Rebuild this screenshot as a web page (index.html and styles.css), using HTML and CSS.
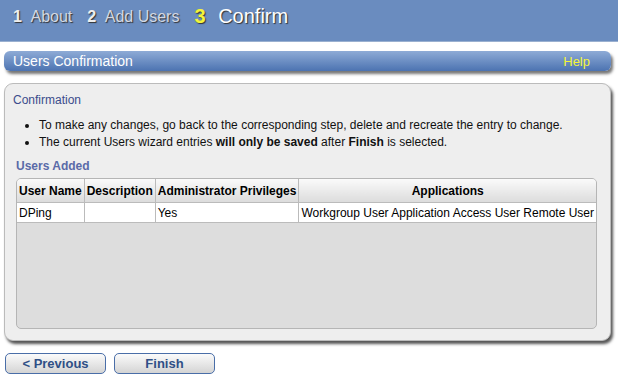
FILE: index.html
```html
<!DOCTYPE html>
<html lang="en">

<head>
    <meta charset="UTF-8">
    <title>Users Wizard - Confirm</title>
    <link rel="stylesheet" href="styles.css">
</head>

<body>
    <div class="steps">
        <span class="step"><b>1</b> About</span>
        <span class="step"><b>2</b> Add Users</span>
        <span class="step current"><b>3</b> Confirm</span>
    </div>

    <div class="page">
        <div class="title-bar">
            <span>Users Confirmation</span>
            <a class="help" href="#">Help</a>
        </div>

        <div class="panel">
            <div class="panel-title">Confirmation</div>
            <ul class="notes">
                <li>To make any changes, go back to the corresponding step, delete and recreate the entry to change.</li>
                <li>The current Users wizard entries <strong>will only be saved</strong> after <strong>Finish</strong> is selected.</li>
            </ul>

            <div class="section-title">Users Added</div>
            <div class="grid">
                <table>
                    <tr>
                        <th class="col-name">User Name</th>
                        <th class="col-desc">Description</th>
                        <th class="col-admin">Administrator Privileges</th>
                        <th class="col-apps">Applications</th>
                    </tr>
                    <tr>
                        <td>DPing</td>
                        <td></td>
                        <td>Yes</td>
                        <td>Workgroup User Application Access User Remote User</td>
                    </tr>
                </table>
            </div>
        </div>

        <div class="buttons">
            <button class="btn">&lt; Previous</button>
            <button class="btn">Finish</button>
        </div>
    </div>
</body>

</html>
```

FILE: styles.css
```css
body {
    margin: 0;
    font-family: Arial, "Liberation Sans", sans-serif;
    background: white;
    color: #000;
}

.steps {
    height: 42px;
    background: #6a8cbf;
    border-bottom: 1px solid #9ab0d0;
    padding: 0 0 8px 13px;
    display: flex;
    align-items: center;
    gap: 15px;
    box-sizing: border-box;
}

.step {
    font-size: 16px;
    color: #d3d8e2;
    text-shadow: 1px 1px 1px #333;
}

.step b {
    color: #eeeeee;
    margin-right: 5px;
}

.step.current {
    font-size: 20px;
    color: #ffffff;
}

.step.current b {
    color: #f4f43a;
    margin-right: 7px;
}

.page {
    padding: 9px 7px 0 4px;
}

.title-bar {
    height: 20px;
    display: flex;
    justify-content: space-between;
    align-items: center;
    padding: 0 21px 0 9px;
    border-radius: 6px;
    background: linear-gradient(#8eabd6, #4c73b1);
    color: white;
    font-size: 14px;
    box-shadow: 2px 3px 3px #777;
}

.help {
    color: #f4f43a;
    font-size: 13px;
    text-decoration: none;
}

.panel {
    margin-top: 12px;
    height: 258px;
    box-sizing: border-box;
    background: #eeeeee;
    border: 1px solid #bbbbbb;
    border-radius: 9px;
    padding: 9px 13px 0 8px;
    box-shadow: 2px 3px 3px #555;
}

.panel-title {
    font-size: 12px;
    color: #3b4c8c;
}

.notes {
    margin: 10px 0 0 0;
    padding-left: 26px;
    font-size: 12px;
    color: #111;
    line-height: 17px;
}

.section-title {
    margin: 8px 0 0 3px;
    font-size: 12px;
    font-weight: bold;
    color: #5a6aa8;
}

.grid {
    margin: 5px 0 0 3px;
    height: 151px;
    box-sizing: border-box;
    background: #dddddd;
    border: 1px solid #b5b5b5;
    border-radius: 5px;
    overflow: hidden;
}

table {
    width: 100%;
    border-collapse: collapse;
    font-size: 12px;
}

th {
    height: 23px;
    padding: 0 2px;
    background: linear-gradient(#fafafa, #dcdcdc);
    border-right: 1px solid #bbbbbb;
    border-bottom: 1px solid #bbbbbb;
    white-space: nowrap;
}

th.col-name,
th.col-desc,
th.col-admin {
    text-align: left;
}

td {
    height: 19px;
    padding: 0 2px;
    background: white;
    border-right: 1px solid #bbbbbb;
    border-bottom: 1px solid #bbbbbb;
    white-space: nowrap;
}

th:last-child,
td:last-child {
    border-right: none;
}

.col-desc {
    width: 67px;
}

.buttons {
    margin-top: 12px;
    display: flex;
    gap: 8px;
    padding-left: 1px;
}

.btn {
    width: 101px;
    height: 21px;
    border: 1px solid #4a6ea8;
    border-radius: 5px;
    background: linear-gradient(#fbfbfb, #d4d4d4);
    color: #2f4f86;
    font-family: Arial, "Liberation Sans", sans-serif;
    font-size: 13px;
    font-weight: bold;
    padding: 0;
}
```
